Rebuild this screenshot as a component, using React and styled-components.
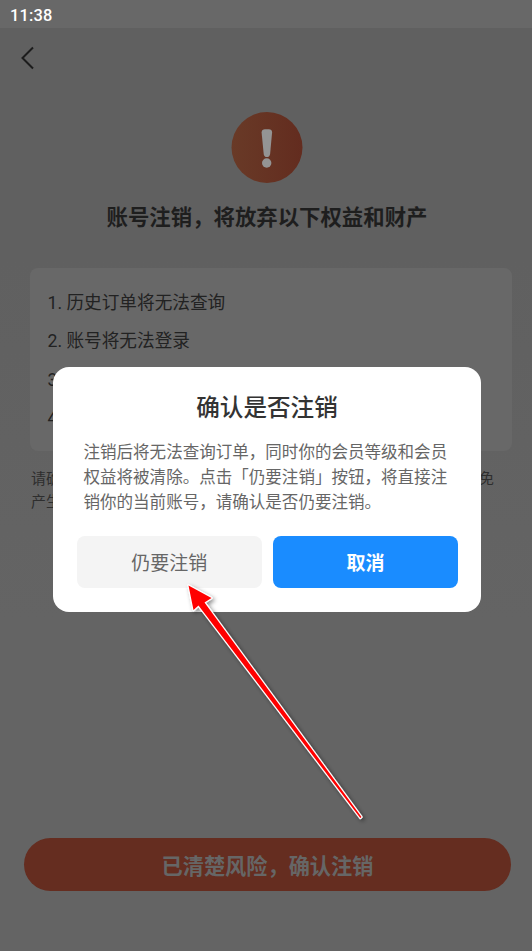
import React from "react";
import styled, { createGlobalStyle } from "styled-components";

const Global = createGlobalStyle`
  html, body { margin: 0; padding: 0; }
  body { font-family: Roboto, "Noto Sans CJK SC", "Noto Sans", sans-serif; background: #636363; }
  * { box-sizing: border-box; }
`;
const Page = styled.div`
  position: relative; width: 532px; height: 951px; overflow: hidden;
  display: flex; flex-direction: column;
  background: linear-gradient(#606060 0, #606060 260px, #646464 620px, #646464 100%);
`;
const StatusBar = styled.div`
  height: 28px; flex: none; background: #686868; color: #fff;
  font-size: 16.4px; font-weight: 500; letter-spacing: .2px;
  display: flex; align-items: center; padding: 2px 10px 0;
`;
const Nav = styled.div`height: 60px; flex: none; display: flex; align-items: center; padding: 0 0 0 20px;`;
const Content = styled.div`
  flex: 1; width: 534px; display: flex; flex-direction: column; align-items: center; padding: 24px 0 60px;
`;
const Heading = styled.h1`
  margin: 17px 0 0; font-size: 21.4px; line-height: 34px; font-weight: 700; color: #1e1e1e;
`;
const Card = styled.div`
  margin-top: 33px; width: 482px; height: 183px; align-self: flex-start; margin-left: 29.500px;
  background: #686868; border-radius: 8px; padding: 15.500px 18px; overflow: hidden;
`;
const Item = styled.div`font-size: 17.65px; line-height: 38.5px; color: #222; white-space: nowrap;`;
const Note = styled.p`
  margin: 17px 0 0 31px; align-self: flex-start; width: 464px; font-size: 14.95px; line-height: 23px; color: #2e2e2e;
`;
const Confirm = styled.div`
  margin-top: auto; width: 487px; height: 53px; border-radius: 27px; background: #652d20; color: #666;
  font-size: 21.2px; font-weight: 700; padding-left: 1px;
  display: flex; align-items: center; justify-content: center;
`;
const Layer = styled.div`
  position: absolute; left: 0; top: 0; width: 534px; height: 951px; padding-top: 28px;
  display: flex; align-items: center; justify-content: center;
`;
const Dialog = styled.div`
  width: 428px; height: 245px; background: #fff; border-radius: 16px;
  padding: 23px 24px 24px; display: flex; flex-direction: column;
`;
const DialogTitle = styled.h2`
  margin: 0; text-align: center; font-size: 23.6px; line-height: 36px; font-weight: 500; color: #333;
`;
const DialogBody = styled.p`
  margin: 15px 0 0 6.500px; width: 368px; font-size: 16.55px; line-height: 24.8px; color: #666;
`;
const Actions = styled.div`display: grid; grid-template-columns: 184.500px 185px; gap: 11.500px; margin-top: auto;`;
const Action = styled.div`
  height: 52px; padding-bottom: 1px; border-radius: 8px; font-size: 19px;
  display: flex; align-items: center; justify-content: center;
  background: ${p => p.$primary ? "#1a8cff" : "#f4f4f4"};
  color: ${p => p.$primary ? "#fff" : "#666"};
  font-weight: ${p => p.$primary ? 700 : 400};
`;
const Overlay = styled.svg`position: absolute; left: 0; top: 0; pointer-events: none;`;

const Warning = () => (
  <svg width="72" height="72" viewBox="0 0 72 72">
    <defs>
      <linearGradient id="warn" x1="0" x2="1" y1="0" y2="0">
        <stop offset="0" stopColor="#693a27" />
        <stop offset="1" stopColor="#632c1f" />
      </linearGradient>
    </defs>
    <circle cx="36" cy="35.5" r="35.500" fill="url(#warn)" />
    <path d="M30.600 20.500c0-2 1.500-3.200 3.300-3.200h4c1.800 0 3.300 1.200 3.200 3.200l-2 21.500c-.2 2-1.400 3.100-3.200 3.100s-3-1.100-3.200-3.100z" fill="#949494" />
    <circle cx="35.700" cy="51" r="4.700" fill="#949494" />
  </svg>
);
const Back = () => (
  <svg width="16" height="26" viewBox="0 0 16 26" fill="none">
    <path d="M13 2.500 2.500 13 13 23.500" stroke="#1c1c1c" strokeWidth="2" />
  </svg>
);

export default function App() {
  return (
    <Page>
      <Global />
      <StatusBar>11:38</StatusBar>
      <Nav><Back /></Nav>
      <Content>
        <Warning />
        <Heading>账号注销，将放弃以下权益和财产</Heading>
        <Card>
          <Item>1. 历史订单将无法查询</Item>
          <Item>2. 账号将无法登录</Item>
          <Item>3. 会员等级将被清除</Item>
          <Item>4. 会员权益将被清除</Item>
        </Card>
        <Note>请确认账号内的资产已处理完毕，注销后将无法恢复，请谨慎操作以免产生不必要的损失</Note>
        <Confirm>已清楚风险，确认注销</Confirm>
      </Content>
      <Layer>
        <Dialog>
          <DialogTitle>确认是否注销</DialogTitle>
          <DialogBody>注销后将无法查询订单，同时你的会员等级和会员权益将被清除。点击「仍要注销」按钮，将直接注销你的当前账号，请确认是否仍要注销。</DialogBody>
          <Actions>
            <Action>仍要注销</Action>
            <Action $primary>取消</Action>
          </Actions>
        </Dialog>
      </Layer>
      <Overlay width="532" height="951" viewBox="0 0 532 951">
        <defs>
          <filter id="sh" x="-20%" y="-20%" width="140%" height="140%">
            <feDropShadow dx="2" dy="2" stdDeviation="2" floodColor="#000" floodOpacity=".45" />
          </filter>
        </defs>
        <path
          d="M188.500 585.500 211.500 598 204.500 602.500 361.500 817 360.300 818 198.500 605.500 193.500 610Z"
          fill="#ff0000" stroke="#fff" strokeWidth="2.400" strokeLinejoin="round" paintOrder="stroke" filter="url(#sh)"
        />
      </Overlay>
    </Page>
  );
}
